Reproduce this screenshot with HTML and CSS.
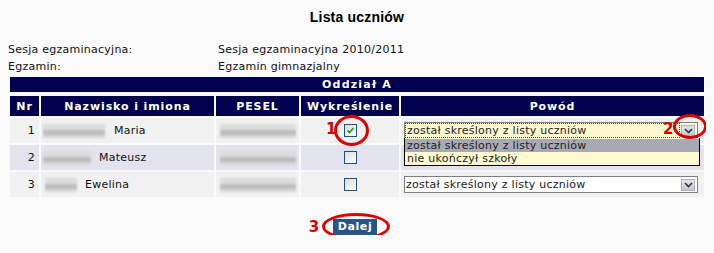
FILE: index.html
```html
<!DOCTYPE html>
<html lang="pl">
<head>
<meta charset="utf-8">
<title>Lista uczniów</title>
<link rel="stylesheet" href="styles.css">
</head>
<body>
<h1 class="title">Lista uczniów</h1>
<div class="info">
  <div class="info-row"><span class="info-label">Sesja egzaminacyjna:</span><span>Sesja egzaminacyjna 2010/2011</span></div>
  <div class="info-row"><span class="info-label">Egzamin:</span><span>Egzamin gimnazjalny</span></div>
</div>
<div class="bar">Oddział A</div>
<table class="list">
  <colgroup>
    <col class="c-nr"><col class="c-name"><col class="c-pesel"><col class="c-wyk"><col class="c-pow">
  </colgroup>
  <thead>
    <tr><th>Nr</th><th>Nazwisko i imiona</th><th>PESEL</th><th>Wykreślenie</th><th>Powód</th></tr>
  </thead>
  <tbody>
    <tr class="odd">
      <td class="nr">1</td>
      <td class="name"><span class="blur blur-a"></span>Maria</td>
      <td class="pesel"><span class="blur blur-p"></span></td>
      <td class="wyk">
        <span class="mark mark-1">1</span>
        <span class="ring ring-1"></span>
        <span class="cb checked"><svg viewBox="0 0 11 11" width="11" height="11"><path d="M2.5 5.5 L4.5 7.5 L8.5 3" fill="none" stroke="#21a121" stroke-width="1.8"/></svg></span>
      </td>
      <td class="pow">
        <div class="sel sel-focus">
          <span class="sel-text"><span class="focus">został skreślony z listy uczniów</span></span>
          <span class="sel-btn"><svg viewBox="0 0 9 6" width="9" height="6"><path d="M1 1 L4.5 4.5 L8 1" fill="none" stroke="#333" stroke-width="1.6"/></svg></span>
        </div>
        <div class="dropdown">
          <div class="opt opt-sel">został skreślony z listy uczniów</div>
          <div class="opt">nie ukończył szkoły</div>
        </div>
        <span class="mark mark-2">2</span>
        <span class="ring ring-2"></span>
      </td>
    </tr>
    <tr class="even">
      <td class="nr">2</td>
      <td class="name"><span class="blur blur-b"></span>Mateusz</td>
      <td class="pesel"><span class="blur blur-p"></span></td>
      <td class="wyk"><span class="cb"></span></td>
      <td class="pow"></td>
    </tr>
    <tr class="odd">
      <td class="nr">3</td>
      <td class="name"><span class="blur blur-c"></span>Ewelina</td>
      <td class="pesel"><span class="blur blur-p"></span></td>
      <td class="wyk"><span class="cb"></span></td>
      <td class="pow">
        <div class="sel">
          <span class="sel-text">został skreślony z listy uczniów</span>
          <span class="sel-btn"><svg viewBox="0 0 9 6" width="9" height="6"><path d="M1 1 L4.5 4.5 L8 1" fill="none" stroke="#333" stroke-width="1.6"/></svg></span>
        </div>
      </td>
    </tr>
  </tbody>
</table>
<div class="actions">
  <div class="btn-wrap">
    <span class="mark mark-3">3</span>
    <span class="ring ring-3"></span>
    <button class="btn" type="button">Dalej</button>
  </div>
</div>
</body>
</html>
```
FILE: styles.css
```css
html, body {
  background: #fafafa;
}
body {
  margin: 8px;
  font-family: "DejaVu Sans", Verdana, sans-serif;
  font-size: 11px;
  letter-spacing: 0.25px;
  color: #111;
}
.title {
  margin: 1px 0 0;
  font-family: "Liberation Sans", Arial, sans-serif;
  font-size: 14px;
  line-height: 16px;
  font-weight: bold;
  letter-spacing: 0.2px;
  text-align: center;
  color: #000;
}
.info {
  margin-top: 16px;
}
.info-row {
  display: flex;
  line-height: 17px;
}
.info-label {
  width: 210px;
}
.bar {
  margin: 2px 2px 0;
  height: 15px;
  line-height: 15px;
  background: #00004f;
  color: #fff;
  font-weight: bold;
  text-align: center;
  letter-spacing: 1.2px;
}
.list {
  width: 100%;
  table-layout: fixed;
  border-collapse: separate;
  border-spacing: 2px;
  margin-top: 2px;
}
.c-nr { width: 29px; }
.c-name { width: 173px; }
.c-pesel { width: 83px; }
.c-wyk { width: 98px; }
.list th {
  height: 20px;
  padding: 0;
  background: #00004f;
  color: #fff;
  font-weight: bold;
  letter-spacing: 0.9px;
  text-align: center;
}
.list td {
  height: 25px;
  padding: 0;
  vertical-align: middle;
  white-space: nowrap;
}
.odd td { background: #f1f1f1; }
.even td { background: #e3e3ed; }
.nr {
  text-align: right;
  padding-right: 4px !important;
}
.name {
  padding-left: 2px !important;
}
.blur {
  display: inline-block;
  vertical-align: middle;
  height: 14px;
  background: linear-gradient(#dcdcdc 0 40%, #bdbdbd 40% 80%, #d6d6d6 80%);
  filter: blur(1.2px);
}
.blur-a { width: 62px; margin-right: 9px; }
.blur-b { width: 48px; margin-right: 8px; }
.blur-c { width: 32px; margin-right: 8px; margin-left: 2px; }
.blur-p { width: 76px; }
.pesel { text-align: center; }
.wyk {
  text-align: center;
  position: relative;
}
.cb {
  display: inline-block;
  vertical-align: middle;
  width: 11px;
  height: 11px;
  border: 1px solid #1c5180;
  background: linear-gradient(135deg, #dcdcd6, #fff);
  margin-left: 1px;
}
.cb svg { display: block; }
.pow {
  position: relative;
  padding-left: 3px !important;
}
.sel {
  display: flex;
  align-items: center;
  width: 292px;
  height: 15px;
  border: 1px solid #7f7f7f;
  background: #fff;
  box-sizing: content-box;
}
.sel-focus {
  background: #fff9cf;
}
.sel-text {
  flex: 1;
  padding-left: 1px;
  line-height: 13px;
  color: #222;
}
.focus {
  display: block;
  margin-right: 2px;
  outline: 1px dotted #444;
  outline-offset: 0;
  padding-left: 1px;
}
.sel-btn {
  width: 14px;
  height: 12px;
  margin-right: 2px;
  background: linear-gradient(#e3e5ee, #c3c6d2);
  border: 1px solid #aeb1bd;
  box-sizing: border-box;
  display: flex;
  align-items: center;
  justify-content: center;
}
.dropdown {
  position: absolute;
  left: 3px;
  top: 20px;
  width: 294px;
  border: 1px solid #000;
  border-top: none;
  background: #fff9cf;
  z-index: 2;
}
.opt {
  height: 13px;
  line-height: 13px;
  padding-left: 2px;
  color: #222;
}
.opt-sel {
  background: #a7a9b5;
  margin-top: 1px;
}
.mark {
  position: absolute;
  color: #d80000;
  font-weight: bold;
  font-size: 15px;
  line-height: 15px;
  letter-spacing: 0;
  z-index: 3;
}
.ring {
  position: absolute;
  border: 3px solid #dd0000;
  border-radius: 50%;
  box-sizing: border-box;
  z-index: 3;
}
.mark-1 { left: 25px; top: 4px; }
.ring-1 { left: 33px; top: -3px; width: 35px; height: 31px; }
.mark-2 { left: 262px; top: 4px; }
.ring-2 { left: 272px; top: -4px; width: 34px; height: 25px; }
.actions {
  display: flex;
  justify-content: center;
  margin-top: 20px;
}
.btn-wrap {
  position: relative;
  margin-left: -4px;
}
.btn {
  display: block;
  height: 16px;
  padding: 0 5px;
  border: none;
  background: #2a5485;
  color: #fff;
  font-family: "DejaVu Sans", Verdana, sans-serif;
  font-size: 11px;
  font-weight: bold;
  letter-spacing: 0.6px;
  line-height: 16px;
}
.mark-3 { left: -24px; top: 1px; }
.ring-3 { left: -11px; top: -6px; width: 68px; height: 27px; }
```
